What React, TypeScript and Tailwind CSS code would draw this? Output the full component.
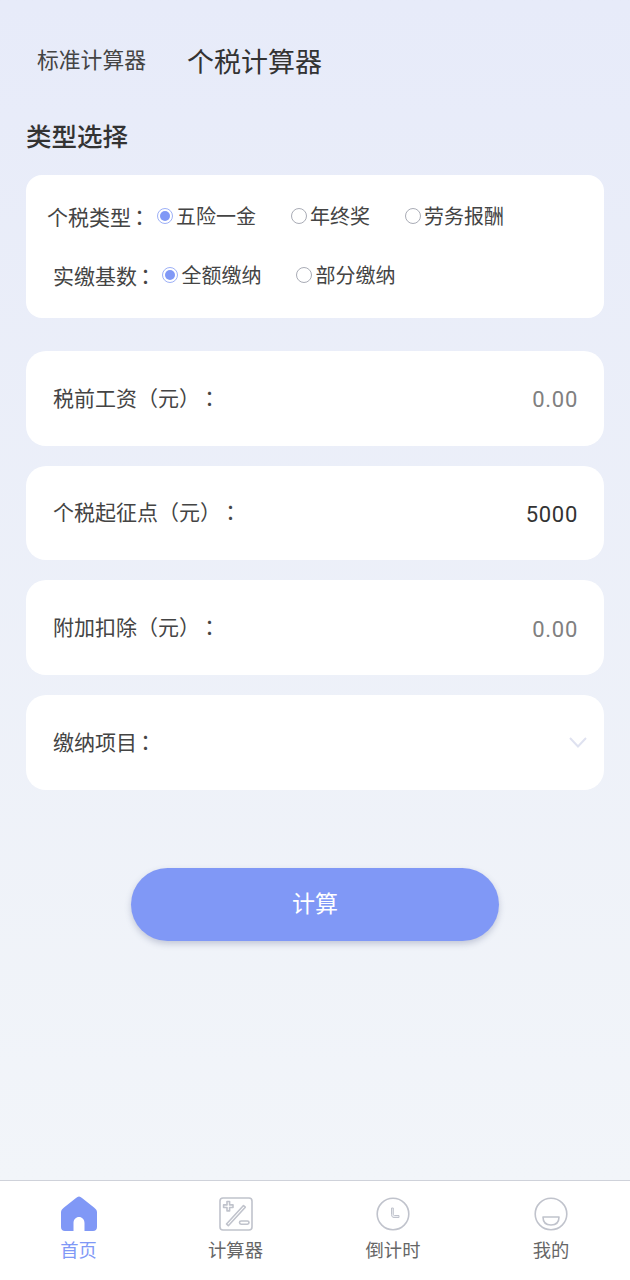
const cjk = "font-['Noto_Sans_CJK_SC','Noto_Sans',sans-serif] [text-spacing-trim:space-all]";

function Colon({ tight }: { tight?: boolean }) {
  return <span className={`${tight ? "-ml-[2px]" : "-ml-[1px]"} font-['Noto_Sans_CJK_TC',sans-serif]`}>：</span>;
}

function Radio({ label, checked }: { label: string; checked?: boolean }) {
  return (
    <div className="flex items-center gap-[3.5px]">
      {checked ? (
        <span className="flex h-4 w-4 items-center justify-center rounded-full border border-[#9db0f7]">
          <span className="h-[10px] w-[10px] rounded-full bg-[#8098f6]" />
        </span>
      ) : (
        <span className="h-4 w-4 rounded-full border-[1.5px] border-[#a9acb6]" />
      )}
      <span className="text-[20px] leading-[28px] text-[#444444]">{label}</span>
    </div>
  );
}

function FieldCard({ label, tight, children }: { label: string; tight?: boolean; children?: React.ReactNode }) {
  return (
    <div className="flex h-[94.67px] items-center justify-between rounded-[20px] bg-white pl-[27px] pr-[26px]">
      <span className="pb-[2px] text-[21px] text-[#444444]">
        {label}
        <Colon tight={tight} />
      </span>
      {children}
    </div>
  );
}

function Amount({ value, dark }: { value: string; dark?: boolean }) {
  return (
    <span className={`pt-[3px] font-['Roboto',sans-serif] text-[22px] tracking-[0.7px] ${dark ? "text-[#333333]" : "text-[#808080]"}`}>
      {value}
    </span>
  );
}

function HomeIcon() {
  return (
    <svg width="36" height="36" viewBox="0 0 36 36">
      <path
        d="M18 0.5 C19 0.5 20 1 21 2 L33 11.5 C35 13 36 14.5 36 16.5 V31 C36 33.5 34.5 35 32 35 H23.5 V27 C23.5 23.5 21 21 18 21 C15 21 12.5 23.5 12.5 27 V35 H4 C1.5 35 0 33.5 0 31 V16.5 C0 14.5 1 13 3 11.5 L15 2 C16 1 17 0.5 18 0.5 Z"
        fill="#8098f6"
      />
    </svg>
  );
}

function CalcIcon() {
  return (
    <svg width="34" height="34" viewBox="0 0 34 34" fill="none" stroke="#c0c3cc" strokeWidth="1.6">
      <rect x="1" y="1" width="32" height="32" rx="3" />
      <path d="M8 4.5 h2.6 v3.4 h3.4 v2.6 h-3.4 v3.4 h-2.6 v-3.4 h-3.4 v-2.6 h3.4 z" strokeLinejoin="round" />
      <path d="M7.5 27 L24.5 8.5 L26.3 10.2 L9.3 28.7 Z" strokeLinejoin="round" />
      <rect x="20.5" y="24" width="9.5" height="3.2" rx="1.6" />
    </svg>
  );
}

function ClockIcon() {
  return (
    <svg width="34" height="34" viewBox="0 0 34 34" fill="none" stroke="#c0c3cc" strokeWidth="1.6">
      <circle cx="17" cy="17" r="15.8" />
      <path d="M15.5 11 V17.5 C15.5 19.5 16.5 20.5 18 20.5 H23 V18.5 H18.5 C17.7 18.5 17.3 18 17.3 17 V11 Z" strokeWidth="1" strokeLinejoin="round" fill="#eceef2" />
    </svg>
  );
}

function MineIcon() {
  return (
    <svg width="34" height="34" viewBox="0 0 34 34" fill="none" stroke="#c0c3cc" strokeWidth="1.6">
      <circle cx="17" cy="17" r="15.8" />
      <path d="M9 20 H25 C25 25 22 28 17 28 C12 28 9 25 9 20 Z" strokeLinejoin="round" />
    </svg>
  );
}

function NavItem({ label, active, icon }: { label: string; active?: boolean; icon: React.ReactNode }) {
  return (
    <div className="flex flex-col items-center">
      <div className="flex h-[36px] items-center justify-center">{icon}</div>
      <span className={`mt-[4px] text-[18.3px] leading-[26px] ${active ? "text-[#8098f6]" : "text-[#666666]"}`}>
        {label}
      </span>
    </div>
  );
}

export default function App() {
  return (
    <div className={`flex h-[1280px] w-[630px] flex-col ${cjk}`}>
      <div className="flex-1 bg-gradient-to-b from-[#e7ebf9] to-[#f2f5f9] px-[26px]">
        {/* tabs */}
        <div className="flex items-center pl-[11px] pt-[38px]">
          <span className="text-[21.8px] leading-[42px] text-[#444444]">标准计算器</span>
          <span className="ml-[41px] translate-y-[2px] text-[27px] leading-[42px] text-[#333333]">个税计算器</span>
        </div>

        <h2 className="mt-[38px] text-[25.5px] font-medium leading-[34px] text-[#333333]">类型选择</h2>

        {/* type options */}
        <div className="mt-[23px] h-[143px] rounded-[16px] bg-white">
          <div className="flex items-center pl-[21px] pt-[27px]">
            <span className="text-[21px] leading-[28px] text-[#444444]">
              个税类型
              <Colon tight />
            </span>
            <div className="ml-[6.5px] flex gap-[34.5px]">
              <Radio label="五险一金" checked />
              <Radio label="年终奖" />
              <Radio label="劳务报酬" />
            </div>
          </div>
          <div className="mt-[31px] flex items-center pl-[27px]">
            <span className="text-[21px] leading-[28px] text-[#444444]">
              实缴基数
              <Colon tight />
            </span>
            <div className="ml-[6px] flex gap-[34.5px]">
              <Radio label="全额缴纳" checked />
              <Radio label="部分缴纳" />
            </div>
          </div>
        </div>

        {/* fields */}
        <div className="mt-[33px] flex flex-col gap-[20px]">
          <FieldCard label="税前工资（元）">
            <Amount value="0.00" />
          </FieldCard>
          <FieldCard label="个税起征点（元）">
            <Amount value="5000" dark />
          </FieldCard>
          <FieldCard label="附加扣除（元）">
            <Amount value="0.00" />
          </FieldCard>
          <FieldCard label="缴纳项目" tight>
            <svg className="-mr-[9px]" width="18" height="11" viewBox="0 0 18 11" fill="none" stroke="#dfe2f0" strokeWidth="2">
              <path d="M1 1 L9 9.5 L17 1" />
            </svg>
          </FieldCard>
        </div>

        <div className="mt-[78px] flex justify-center">
          <button className="h-[73px] w-[368px] rounded-full bg-[#8098f6] pb-[4px] text-[23px] text-white shadow-[0_3px_6px_rgba(90,100,140,0.3)]">
            计算
          </button>
        </div>
      </div>

      {/* bottom nav */}
      <div className="grid h-[100px] grid-cols-[157px_157px_158px_158px] border-t border-[#cfd2da] bg-white pt-[15px]">
        <NavItem label="首页" active icon={<HomeIcon />} />
        <NavItem label="计算器" icon={<CalcIcon />} />
        <NavItem label="倒计时" icon={<ClockIcon />} />
        <NavItem label="我的" icon={<MineIcon />} />
      </div>
    </div>
  );
}
